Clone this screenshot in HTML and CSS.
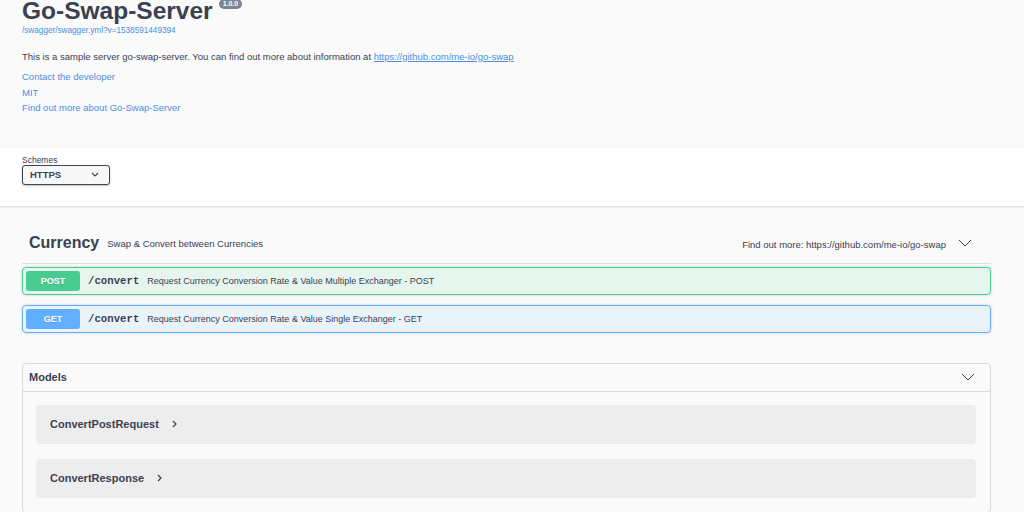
FILE: index.html
```html
<!DOCTYPE html>
<html lang="en">
<head>
    <meta charset="UTF-8">
    <meta name="viewport" content="width=device-width, initial-scale=1.0">
    <title>Go-Swap-Server</title>
    <link rel="stylesheet" href="styles.css">
</head>
<body>
    <div class="info">
        <div class="title-row">
            <h2 class="title">Go-Swap-Server</h2>
            <span class="version">1.0.0</span>
        </div>
        <a class="url" href="#">/swagger/swagger.yml?v=1538591449394</a>
        <p class="description">This is a sample server go-swap-server. You can find out more about information at <a href="#">https://github.com/me-io/go-swap</a></p>
        <div class="contact">
            <a href="#">Contact the developer</a>
            <a href="#">MIT</a>
            <a href="#">Find out more about Go-Swap-Server</a>
        </div>
    </div>

    <div class="scheme-container">
        <span class="schemes-title">Schemes</span>
        <div class="select">
            <span>HTTPS</span>
            <svg width="8" height="5" viewBox="0 0 8 5"><polyline points="1,1 4,4 7,1" fill="none" stroke="#3b4151" stroke-width="1.1"/></svg>
        </div>
    </div>

    <div class="wrapper">
        <div class="tag">
            <h4 class="tag-name">Currency</h4>
            <small class="tag-desc">Swap &amp; Convert between Currencies</small>
            <div class="tag-more">Find out more: <a href="#">https://github.com/me-io/go-swap</a></div>
            <svg class="tag-arrow" width="14" height="8" viewBox="0 0 14 8"><polyline points="1,1 7,7 13,1" fill="none" stroke="#3b4151" stroke-width="1"/></svg>
        </div>

        <div class="opblock opblock-post">
            <span class="method">POST</span>
            <span class="path">/convert</span>
            <span class="summary">Request Currency Conversion Rate &amp; Value Multiple Exchanger - POST</span>
        </div>
        <div class="opblock opblock-get">
            <span class="method">GET</span>
            <span class="path">/convert</span>
            <span class="summary">Request Currency Conversion Rate &amp; Value Single Exchanger - GET</span>
        </div>

        <section class="models">
            <div class="models-head">
                <h4>Models</h4>
                <svg width="14" height="8" viewBox="0 0 14 8"><polyline points="1,1 7,7 13,1" fill="none" stroke="#3b4151" stroke-width="1"/></svg>
            </div>
            <div class="model">
                <span>ConvertPostRequest</span>
                <svg width="5" height="8" viewBox="0 0 5 8"><polyline points="1,1 4,4 1,7" fill="none" stroke="#3b4151" stroke-width="1.2"/></svg>
            </div>
            <div class="model">
                <span>ConvertResponse</span>
                <svg width="5" height="8" viewBox="0 0 5 8"><polyline points="1,1 4,4 1,7" fill="none" stroke="#3b4151" stroke-width="1.2"/></svg>
            </div>
        </section>
    </div>
</body>
</html>
```

FILE: styles.css
```css
body {
    margin: 0;
    padding: 0;
    font-family: "Liberation Sans", Arial, sans-serif;
    background-color: #fafafa;
    color: #3b4151;
    overflow: hidden;
}

a {
    color: #4990e2;
    text-decoration: none;
}

.info {
    padding: 0 22px 32px;
}

.title-row {
    display: flex;
    align-items: flex-start;
    margin-top: -1px;
}

.title {
    margin: 0;
    font-size: 24.5px;
    line-height: 1;
    font-weight: bold;
    color: #3b4151;
}

.version {
    margin: 0 0 0 6px;
    padding: 0 4px;
    background-color: #7d8492;
    color: #fff;
    border-radius: 6px;
    font-size: 7px;
    font-weight: bold;
    line-height: 10px;
}

.url {
    display: block;
    margin-top: 1.5px;
    font-size: 8.2px;
    line-height: 12px;
}

.description {
    margin: 12.5px 0 0;
    font-size: 9.5px;
    line-height: 13px;
}

.description a {
    text-decoration: underline;
}

.contact {
    display: flex;
    flex-direction: column;
    margin-top: 6.75px;
}

.contact a {
    font-size: 9.5px;
    line-height: 15.5px;
}

.scheme-container {
    display: flex;
    flex-direction: column;
    align-items: flex-start;
    padding: 7px 22px 21px;
    background-color: #fff;
    box-shadow: 0 1px 2px 0 rgba(0, 0, 0, 0.15);
}

.schemes-title {
    font-size: 8.5px;
    line-height: 10px;
}

.select {
    display: flex;
    align-items: center;
    justify-content: space-between;
    box-sizing: border-box;
    width: 88px;
    height: 20px;
    padding: 0 10px 0 7px;
    border: 1.5px solid #41444e;
    border-radius: 3px;
    box-shadow: 0 1px 2px 0 rgba(0, 0, 0, 0.25);
    background-color: #f7f7f7;
    font-size: 9.5px;
    font-weight: bold;
}

.wrapper {
    padding: 18px 33px 0 22px;
}

.tag {
    display: flex;
    align-items: center;
    height: 39px;
    padding: 0 19px 0 7px;
    border-bottom: 1px solid #dedfe0;
}

.tag-name {
    margin: 0;
    font-size: 16px;
    font-weight: bold;
}

.tag-desc {
    margin-left: 8px;
    font-size: 9.5px;
}

.tag-more {
    margin-left: auto;
    padding-top: 3px;
    font-size: 9.5px;
}

.tag-more a {
    color: #3b4151;
}

.tag-arrow {
    margin-left: 12px;
}

.opblock {
    display: flex;
    align-items: center;
    padding: 3px;
    margin-top: 3px;
    border: 1px solid;
    border-radius: 4px;
    box-shadow: 0 0 3px rgba(0, 0, 0, 0.19);
}

.opblock + .opblock {
    margin-top: 10px;
}

.opblock-post {
    background-color: rgba(73, 204, 144, 0.1);
    border-color: #49cc90;
}

.opblock-get {
    background-color: rgba(97, 175, 254, 0.1);
    border-color: #61affe;
}

.method {
    width: 54px;
    height: 20px;
    line-height: 20px;
    text-align: center;
    border-radius: 3px;
    color: #fff;
    font-size: 9px;
    font-weight: bold;
    text-shadow: 0 1px 0 rgba(0, 0, 0, 0.1);
}

.opblock-post .method {
    background-color: #49cc90;
}

.opblock-get .method {
    background-color: #61affe;
}

.path {
    margin-left: 8px;
    font-family: "Liberation Mono", "Courier New", monospace;
    font-size: 10.7px;
    font-weight: bold;
}

.summary {
    margin-left: 8px;
    font-size: 9px;
}

.models {
    margin-top: 30px;
    border: 1px solid #d8d9dc;
    border-radius: 4px;
    padding-bottom: 14px;
}

.models-head {
    display: flex;
    align-items: center;
    justify-content: space-between;
    height: 27px;
    padding: 0 15px 0 6px;
    border-bottom: 1px solid #d8d9dc;
}

.models-head h4 {
    margin: 0;
    font-size: 11px;
    font-weight: bold;
}

.model {
    display: flex;
    align-items: center;
    gap: 13px;
    height: 39px;
    margin: 13px 14px 0 13px;
    padding-left: 14px;
    border-radius: 4px;
    background-color: rgba(0, 0, 0, 0.05);
    font-size: 11px;
    font-weight: bold;
}

.model + .model {
    margin-top: 15px;
}
```
